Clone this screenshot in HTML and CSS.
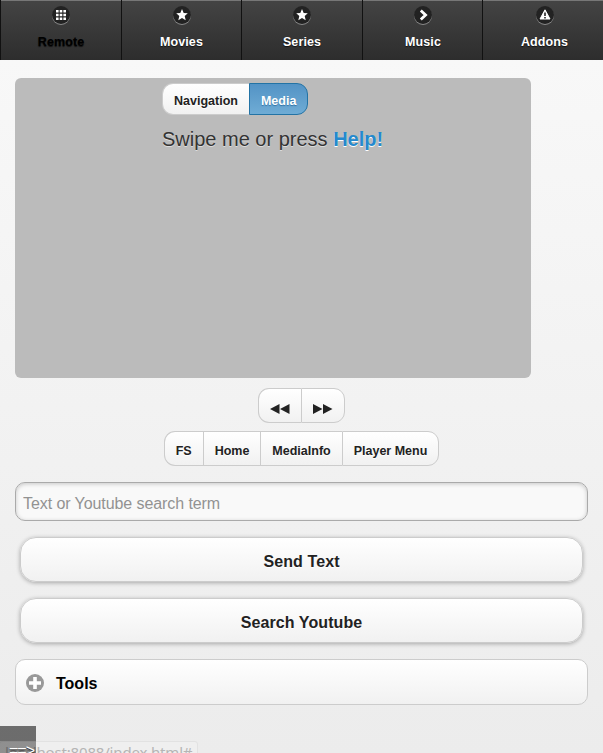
FILE: index.html
```html
<!DOCTYPE html>
<html lang="en">
<head>
<meta charset="utf-8">
<title>Remote</title>
<link rel="stylesheet" href="styles.css">
</head>
<body>
<nav class="navbar">
  <a class="tab active"><svg class="icon" viewBox="0 0 18 18"><path fill="#fff" d="M4 4h2.6v2.6H4zM7.7 4h2.6v2.6H7.7zM11.4 4H14v2.6h-2.6zM4 7.7h2.6v2.6H4zM7.7 7.7h2.6v2.6H7.7zM11.4 7.7H14v2.6h-2.6zM4 11.4h2.6V14H4zM7.7 11.4h2.6V14H7.7zM11.4 11.4H14V14h-2.6z"/></svg><span>Remote</span></a>
  <a class="tab"><svg class="icon" viewBox="0 0 18 18"><path fill="#fff" d="M9 3l1.7 3.9 4.1.3-3.1 2.8 1 4.2L9 12l-3.7 2.2 1-4.2-3.1-2.8 4.1-.3z"/></svg><span>Movies</span></a>
  <a class="tab"><svg class="icon" viewBox="0 0 18 18"><path fill="#fff" d="M9 3l1.7 3.9 4.1.3-3.1 2.8 1 4.2L9 12l-3.7 2.2 1-4.2-3.1-2.8 4.1-.3z"/></svg><span>Series</span></a>
  <a class="tab"><svg class="icon" viewBox="0 0 18 18"><path fill="none" stroke="#fff" stroke-width="2.8" d="M6.8 4.4L11.6 9l-4.8 4.6"/></svg><span>Music</span></a>
  <a class="tab"><svg class="icon" viewBox="0 0 18 18"><path fill="#fff" stroke="#fff" stroke-linejoin="round" d="M9 3.8l5 9.2H4z"/><path stroke="#222" stroke-width="1.6" d="M9 6.4v3.5M9 11v1.5"/></svg><span>Addons</span></a>
</nav>
<main class="content">
  <section class="swipe">
    <div class="swipe-inner">
      <div class="group small"><a class="btn">Navigation</a><a class="btn selected">Media</a></div>
      <p class="hint">Swipe me or press <b>Help!</b></p>
    </div>
  </section>
  <div class="group seek"><a class="btn"><svg width="20" height="10" viewBox="0 0 20 10"><path fill="#222" d="M0 5L9.5 0v10zM10 5l9.5-5v10z"/></svg></a><a class="btn"><svg width="20" height="10" viewBox="0 0 20 10"><path fill="#222" d="M0 0l9.5 5L0 10zM10 0l9.5 5-9.5 5z"/></svg></a></div>
  <div class="group actions"><a class="btn">FS</a><a class="btn">Home</a><a class="btn">MediaInfo</a><a class="btn">Player Menu</a></div>
  <input class="query" type="text" placeholder="Text or Youtube search term">
  <button class="wide">Send Text</button>
  <button class="wide">Search Youtube</button>
  <div class="tools"><svg class="plus" viewBox="0 0 18 18"><circle cx="9" cy="9" r="9" fill="#999"/><path stroke="#fff" stroke-width="3.6" d="M9 3v12M3 9h12"/></svg><span>Tools</span></div>
</main>
<div class="status"><span>localhost:8088/index.html#</span></div>
<div class="console">==&gt;</div>
</body>
</html>
```
FILE: styles.css
```css
* { box-sizing: border-box; }
html { height: 100%; }
body {
  margin: 0;
  height: 753px;
  overflow: hidden;
  position: relative;
  font-family: "Liberation Sans", Arial, sans-serif;
  font-size: 16px;
  color: #222;
  background: linear-gradient(#f9f9f9, #ececec);
}
.navbar {
  display: grid;
  grid-template-columns: 121px 120px 121px 120px 121px;
  height: 60px;
}
.tab {
  display: flex;
  flex-direction: column;
  align-items: center;
  padding-top: 6px;
  border-left: 1px solid #111;
  background: linear-gradient(#444, #2d2d2d);
  box-shadow: inset 0 1px 0 #777;
  color: #fff;
  font-size: 12.5px;
  font-weight: bold;
  line-height: 16px;
  text-shadow: 0 1px 1px #111;
}
.tab.active { color: #000; }
.tab:nth-child(4) { padding-left: 1px; }
.tab:last-child { padding-left: 3px; }
.tab span { margin-top: 10px; letter-spacing: .1px; }
.icon {
  width: 18px;
  height: 18px;
  border-radius: 50%;
  background: #222;
  box-shadow: 0 1px 0 rgba(255, 255, 255, .4);
}
.content { padding: 18px 15px 0; }
.swipe {
  width: 516px;
  height: 300px;
  padding: 5px 0 0 147px;
  border-radius: 6px;
  background: #bbb;
}
.group { display: flex; width: max-content; }
.btn {
  display: flex;
  align-items: center;
  justify-content: center;
  height: 35px;
  padding: 3px 11px 0;
  border: 1px solid #ccc;
  border-right-width: 0;
  background: linear-gradient(#fff, #f1f1f1);
  font-size: 12.5px;
  font-weight: bold;
  text-shadow: 0 1px 0 #fff;
}
.btn:first-child { border-radius: 11px 0 0 11px; }
.btn:last-child { border-right-width: 1px; border-radius: 0 11px 11px 0; }
.small .btn { height: 32px; }
.btn.selected {
  border-color: #2373a5;
  background: linear-gradient(#5393c5, #6facd5);
  color: #fff;
  text-shadow: 0 1px 1px #3373a5;
}
.hint {
  margin: 12px 0 0;
  font-size: 20px;
  line-height: 24px;
  color: #333;
  text-shadow: 0 1px 0 #ddd;
}
.hint b { color: #2489ce; text-shadow: 0 1px 0 #fff; }
.seek { margin: 10px auto 0; }
.seek .btn { padding-top: 6px; }
.actions { margin: 8px auto 0; }
.actions .btn { padding-top: 5px; }
.query {
  display: block;
  width: 573px;
  height: 39px;
  margin: 16px 0;
  padding: 4px 7px 0;
  border: 1px solid #aaa;
  border-radius: 10px;
  background: #f9f9f9;
  box-shadow: inset 0 1px 4px rgba(0, 0, 0, .2);
  font: 16px "Liberation Sans", Arial, sans-serif;
  letter-spacing: -.08px;
}
.query::placeholder { color: #929292; opacity: 1; }
.wide {
  display: block;
  width: 563px;
  height: 45px;
  margin: 0 5px 16px;
  padding: 4px 0 0;
  border: 1px solid #ccc;
  border-radius: 16px;
  background: linear-gradient(#fff, #f1f1f1);
  box-shadow: 0 1px 4px rgba(0, 0, 0, .3);
  color: #222;
  font: bold 16px "Liberation Sans", Arial, sans-serif;
  letter-spacing: .1px;
  text-shadow: 0 1px 0 #fff;
}
.tools {
  display: flex;
  align-items: center;
  gap: 12px;
  height: 46px;
  padding: 2px 10px 0;
  border: 1px solid #ccc;
  border-radius: 10px;
  background: linear-gradient(#fff, #f1f1f1);
  color: #000;
  font-weight: bold;
}
.tools span { padding-top: 2px; }
.plus { width: 18px; height: 18px; }
.status {
  position: absolute;
  left: -1px;
  top: 741px;
  width: 199px;
  height: 24px;
  padding-left: 5px;
  border: 1px solid #e2e2e2;
  border-radius: 3px;
  background: #efefef;
  color: #b5b5b5;
  font: 15px/21px "Noto Sans", sans-serif;
  letter-spacing: -.18px;
  white-space: nowrap;
}
.console {
  position: absolute;
  left: 0;
  top: 726px;
  width: 36px;
  height: 40px;
  padding: 15px 0 0 9px;
  background: linear-gradient(rgba(0, 0, 0, .54) 15px, rgba(0, 0, 0, .4) 15px);
  color: #fff;
  font-size: 16px;
  line-height: 20px;
  letter-spacing: -1px;
  text-shadow: 0 1px 1px #222;
}
```
